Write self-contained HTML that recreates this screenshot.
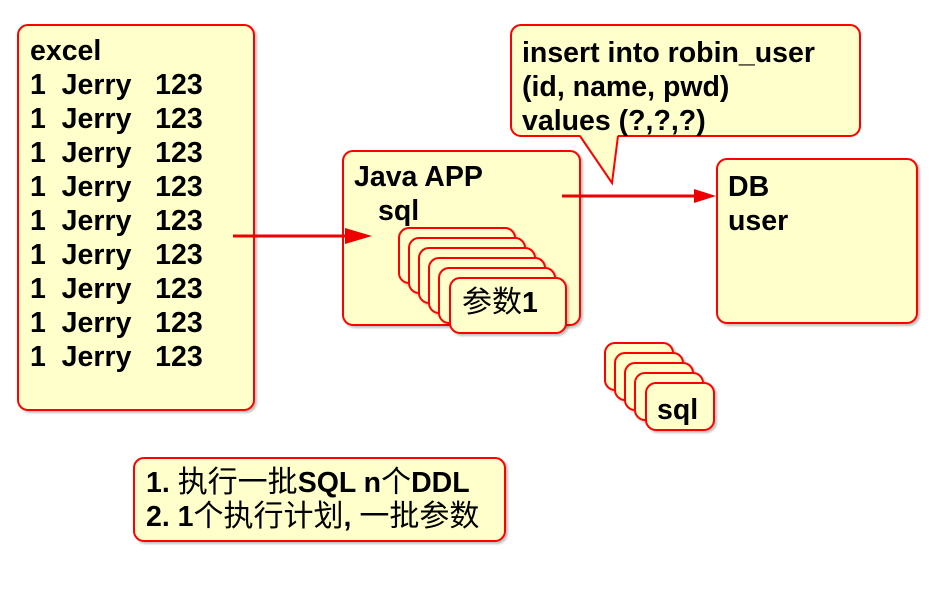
<!DOCTYPE html>
<html><head><meta charset="utf-8"><style>
body{margin:0;width:946px;height:594px;background:#fff;position:relative;overflow:hidden;font-family:"Liberation Sans","Noto Sans CJK SC",sans-serif;font-weight:bold;color:#000}
.b{position:absolute;background:#ffffcc;border:2px solid #f00;border-radius:11px;box-sizing:border-box;box-shadow:2px 2px 2px rgba(0,0,0,.25)}
.t{position:absolute;font-size:28.5px;line-height:34px;white-space:pre}
.cj{font-weight:normal;font-size:30px}
</style></head><body>
<div class="b" style="left:17px;top:24px;width:238px;height:387px"></div>
<div class="t" style="left:30px;top:34px">excel
1  Jerry   123
1  Jerry   123
1  Jerry   123
1  Jerry   123
1  Jerry   123
1  Jerry   123
1  Jerry   123
1  Jerry   123
1  Jerry   123</div>

<div class="b" style="left:342px;top:150px;width:239px;height:176px"></div>
<div class="t" style="left:354px;top:160px">Java APP</div>
<div class="t" style="left:378px;top:194px">sql</div>
<div class="b" style="left:398px;top:227px;width:118px;height:57px"></div>
<div class="b" style="left:408px;top:237px;width:118px;height:57px"></div>
<div class="b" style="left:418px;top:247px;width:118px;height:57px"></div>
<div class="b" style="left:428px;top:257px;width:118px;height:57px"></div>
<div class="b" style="left:438px;top:267px;width:118px;height:57px"></div>
<div class="b" style="left:449px;top:277px;width:118px;height:57px"></div>
<div class="t" style="left:462px;top:286px"><span class="cj">参数</span>1</div>

<svg style="position:absolute;left:0;top:0" width="946" height="594">
<line x1="233" y1="236" x2="352" y2="236" stroke="#e00" stroke-width="3"/>
<path d="M345 228 L372 236 L345 244 Z" fill="#e00"/>
<line x1="562" y1="196" x2="700" y2="196" stroke="#e00" stroke-width="3"/>
<path d="M694 189 L716 196 L694 203 Z" fill="#e00"/>
</svg>
<div class="b" style="left:510px;top:24px;width:351px;height:113px;box-shadow:none"></div>
<svg style="position:absolute;left:0;top:0" width="946" height="594">
<path d="M582 133 L580 136 L612 183 L618 136 L617 133 Z" fill="#ffffcc"/>
<path d="M580 136 L612 183 L618 136" fill="none" stroke="#f00" stroke-width="2"/>
</svg>
<div class="t" style="left:522px;top:36px">insert into robin_user
(id, name, pwd)
values (?,?,?)</div>

<div class="b" style="left:716px;top:158px;width:202px;height:166px"></div>
<div class="t" style="left:728px;top:170px">DB
user</div>

<div class="b" style="left:604px;top:342px;width:70px;height:49px"></div>
<div class="b" style="left:614px;top:352px;width:70px;height:49px"></div>
<div class="b" style="left:624px;top:362px;width:70px;height:49px"></div>
<div class="b" style="left:634px;top:372px;width:70px;height:49px"></div>
<div class="b" style="left:645px;top:382px;width:70px;height:49px"></div>
<div class="t" style="left:657px;top:393px">sql</div>

<div class="b" style="left:133px;top:457px;width:373px;height:85px"></div>
<div class="t" style="left:146px;top:466px">1. <span class="cj">执行一批</span>SQL n<span class="cj">个</span>DDL
2. 1<span class="cj">个执行计划</span>, <span class="cj">一批参数</span></div>
</body></html>
